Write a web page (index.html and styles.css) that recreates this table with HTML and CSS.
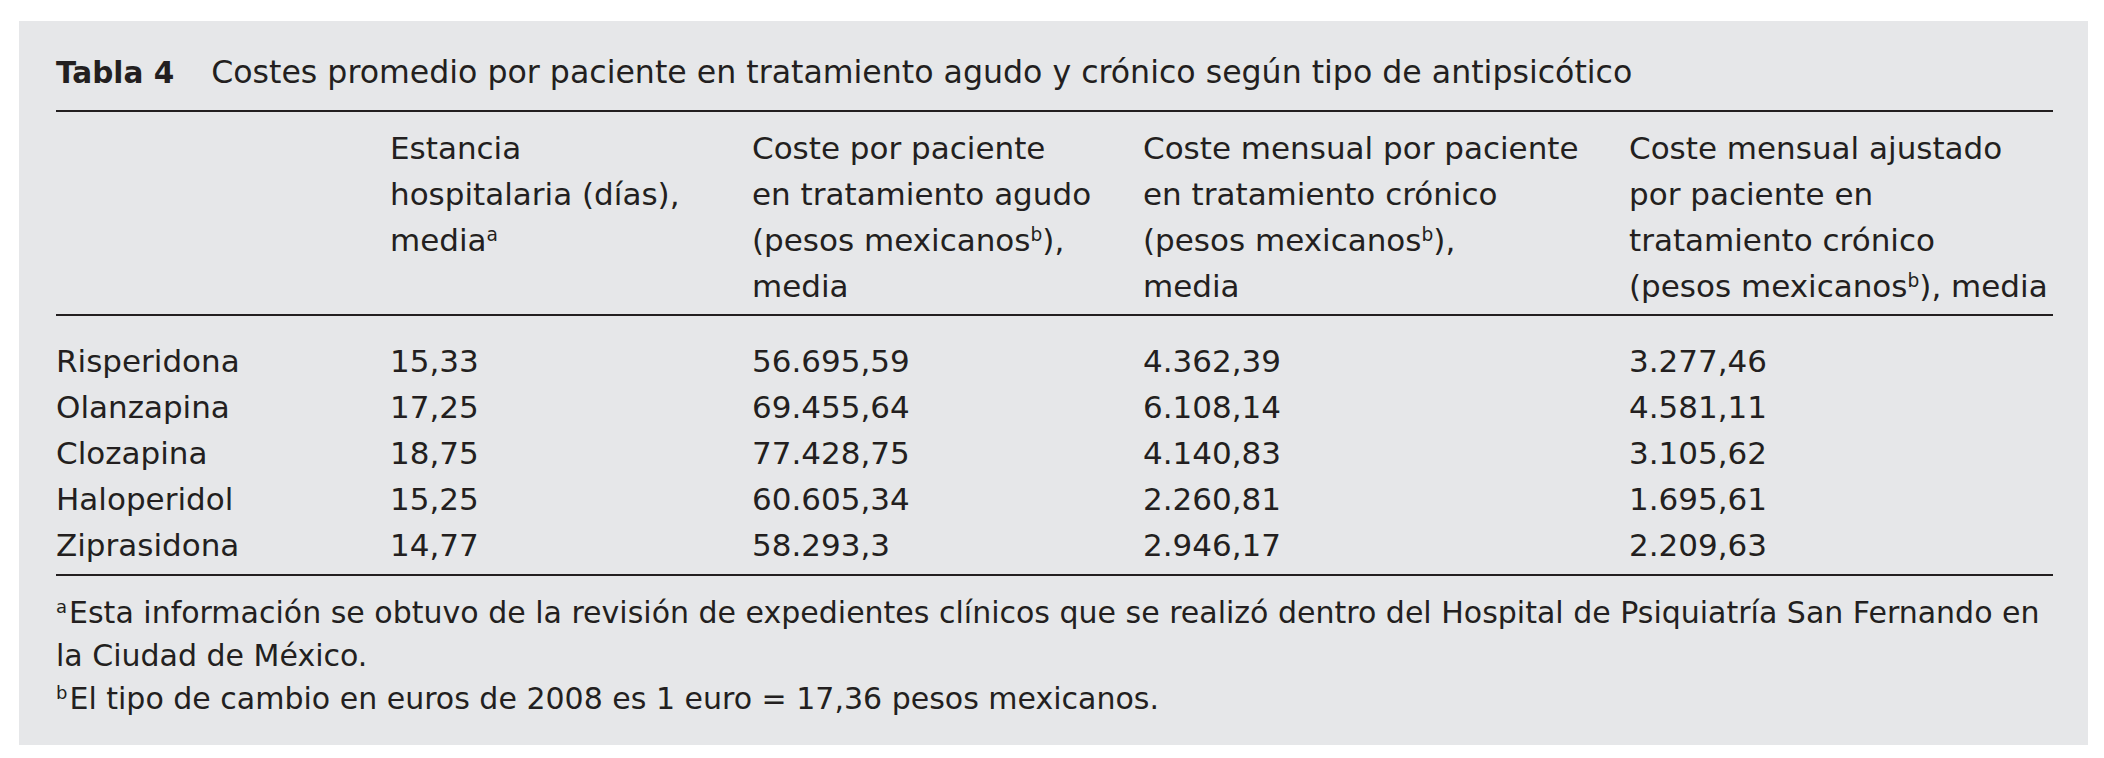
FILE: index.html
```html
<!DOCTYPE html>
<html lang="es">
<head>
<meta charset="utf-8">
<title>Tabla 4</title>
<link rel="stylesheet" href="styles.css">
</head>
<body>
<div class="card">
  <div class="caption"><span class="label">Tabla 4</span><span class="ctext">Costes promedio por paciente en tratamiento agudo y crónico según tipo de antipsicótico</span></div>
  <div class="table">
    <div class="row head">
      <div class="cell"></div>
      <div class="cell">Estancia<br>hospitalaria (días),<br>media<sup>a</sup></div>
      <div class="cell">Coste por paciente<br>en tratamiento agudo<br>(pesos mexicanos<sup>b</sup>),<br>media</div>
      <div class="cell">Coste mensual por paciente<br>en tratamiento crónico<br>(pesos mexicanos<sup>b</sup>),<br>media</div>
      <div class="cell">Coste mensual ajustado<br>por paciente en<br>tratamiento crónico<br>(pesos mexicanos<sup>b</sup>), media</div>
    </div>
    <div class="tbody">
      <div class="row"><div class="cell">Risperidona</div><div class="cell">15,33</div><div class="cell">56.695,59</div><div class="cell">4.362,39</div><div class="cell">3.277,46</div></div>
      <div class="row"><div class="cell">Olanzapina</div><div class="cell">17,25</div><div class="cell">69.455,64</div><div class="cell">6.108,14</div><div class="cell">4.581,11</div></div>
      <div class="row"><div class="cell">Clozapina</div><div class="cell">18,75</div><div class="cell">77.428,75</div><div class="cell">4.140,83</div><div class="cell">3.105,62</div></div>
      <div class="row"><div class="cell">Haloperidol</div><div class="cell">15,25</div><div class="cell">60.605,34</div><div class="cell">2.260,81</div><div class="cell">1.695,61</div></div>
      <div class="row"><div class="cell">Ziprasidona</div><div class="cell">14,77</div><div class="cell">58.293,3</div><div class="cell">2.946,17</div><div class="cell">2.209,63</div></div>
    </div>
  </div>
  <div class="notes">
    <p><sup class="mark">a</sup>Esta información se obtuvo de la revisión de expedientes clínicos que se realizó dentro del Hospital de Psiquiatría San Fernando en la Ciudad de México.</p>
    <p><sup class="mark">b</sup>El tipo de cambio en euros de 2008 es 1 euro = 17,36 pesos mexicanos.</p>
  </div>
</div>
</body>
</html>
```

FILE: styles.css
```css
html, body {
  margin: 0;
  padding: 0;
  background: #ffffff;
}

body {
  font-family: "DejaVu Sans", "Liberation Sans", sans-serif;
  font-size: 30px;
  line-height: 46px;
  color: #231f20;
}

.card {
  margin: 21px 0 0 19px;
  width: 2069px;
  height: 724px;
  box-sizing: border-box;
  padding: 28px 35px 0 37px;
  background: #e6e7e9;
}

.caption {
  display: flex;
  align-items: baseline;
  white-space: nowrap;
}

.label {
  font-weight: bold;
  font-size: 29.5px;
  margin-right: 37px;
}

.ctext {
  font-size: 31.6px;
}

.table {
  margin-top: 14px;
  font-size: 31px;
  border-top: 2px solid #231f20;
  border-bottom: 2px solid #231f20;
}

.row {
  display: grid;
  grid-template-columns: 334px 362px 391px 486px 1fr;
}

.head {
  padding: 13px 0 5px;
  border-bottom: 2px solid #231f20;
}

.tbody {
  padding: 22px 0 6px;
}

.tbody .row {
  height: 46px;
}

.cell {
  white-space: nowrap;
}

sup {
  font-size: 0.6em;
  line-height: 0;
  vertical-align: 0.55em;
}

.notes {
  margin-top: 15px;
  line-height: 43px;
}

.notes p {
  margin: 0;
}

.mark {
  margin-right: 2px;
}
```
